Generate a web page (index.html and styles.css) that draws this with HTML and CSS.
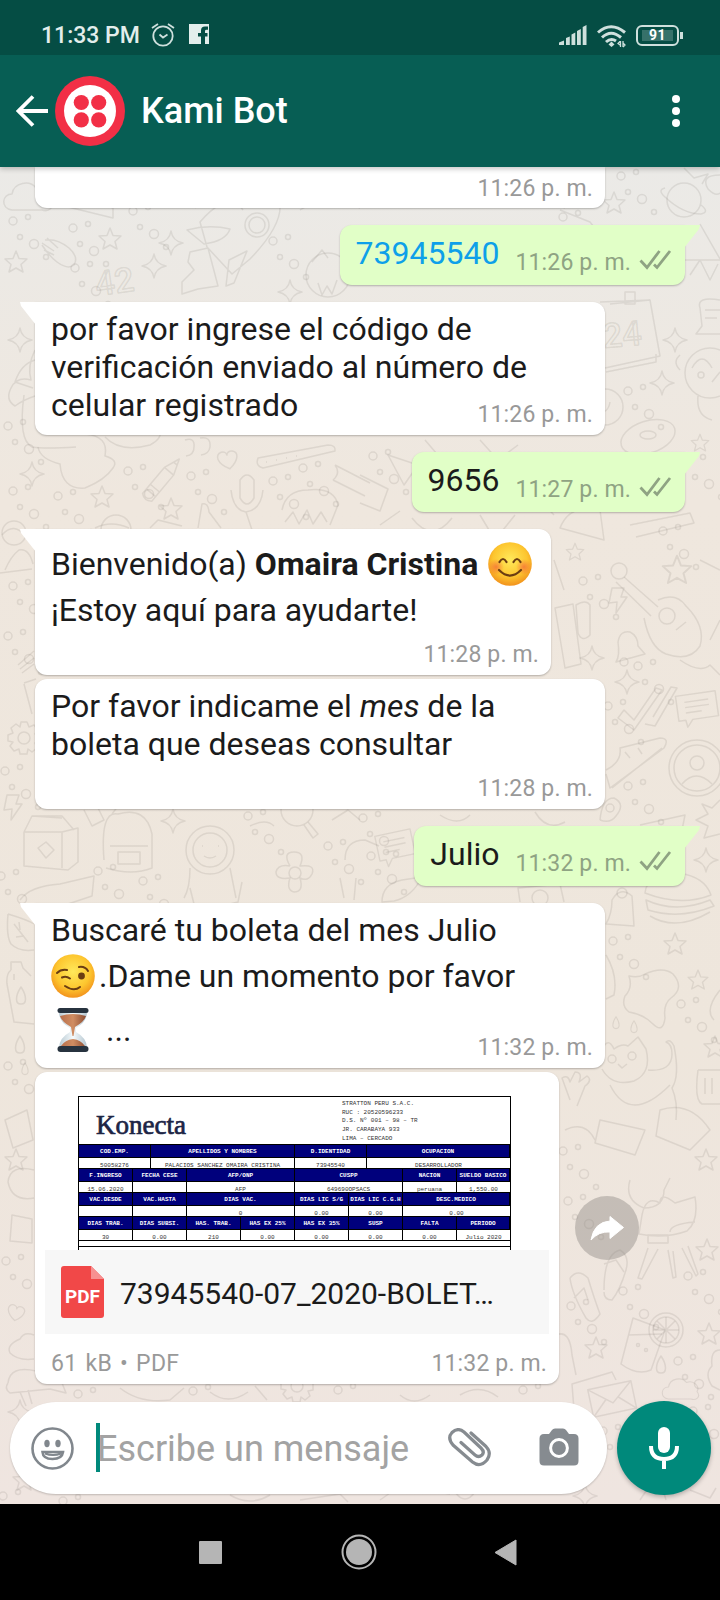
FILE: index.html
```html
<!DOCTYPE html>
<html lang="es">
<head>
<meta charset="utf-8">
<title>Kami Bot</title>
<link rel="stylesheet" href="styles.css">
</head>
<body>
<svg class="defs" width="0" height="0" aria-hidden="true">
  <defs>
    <symbol id="ticks" viewBox="0 0 32 21"><path d="M1 11.500l6.500 7L20 2M14.500 15.500l3 3L30.500 2" fill="none" stroke="#8fa383" stroke-width="2.800"/></symbol>
    <path id="star" d="M0-11L3-3.500 11-3 5 2.500 7 10 0 6-7 10-5 2.500-11-3-3-3.500Z"/>
    <path id="spark" d="M0-12Q1.500-2 12 0 1.500 2 0 12-1.500 2-12 0-1.500-2 0-12Z"/>
    <path id="heart" d="M0 9C-12 1-12-8-5-9-2-9 0-7 0-5 0-7 3-9 6-8 12-6 11 2 0 9Z"/>
    <path id="cloud" d="M-18 12C-30 10-28-4-18-4-16-16 0-18 6-10 16-14 24-4 20 2 26 10 18 14 12 12Z"/>
    <path id="drop" d="M0-9C6 0 6 8 0 8S-6 0 0-9Z"/>
    <path id="bolt" d="M-6-12L6-12 3-3 9-3-2 13-1 2-9 3Z"/>
    <g id="bubbles"><circle cx="3" cy="6" r="4"/><circle cx="18" cy="2" r="2.500"/><circle cx="10" cy="22" r="2.500"/><circle cx="24" cy="29" r="4.500"/><circle cx="36" cy="42" r="2.500"/></g>
    <g id="gear"><circle r="6"/><path d="M-3-16H3L5-11 10-13 14-8 11-4 16-3V4L11 5 13 10 8 14 4 11 3 16H-4L-5 11-10 13-14 8-11 4-16 3V-3L-11-5-13-10-8-14-4-11Z"/></g>
    <g id="pencil"><path d="M-6-14L0-30 6-14V20Q0 25-6 20ZM-6-14H6M-6 8H6M-6 14H6M-2-24H2"/></g>
    <g id="envelope"><path d="M-22-13H22V15H-22ZM-22-13L0 5 22-13M-22 15L-6 0M22 15L6 0"/></g>
    <g id="note"><path d="M-20-14H20V14H-6L-12 22-13 14H-20ZM-12-6H12M-12 0H12M-12 6H4"/></g>
    <linearGradient id="wallTint" x1="0" y1="0" x2="0" y2="1"><stop offset="0" stop-color="#ebeae7"/><stop offset=".25" stop-color="#efe7de"/><stop offset=".65" stop-color="#eee6dc"/><stop offset="1" stop-color="#efe5e0"/></linearGradient>
    <radialGradient id="face" cx=".5" cy=".4" r=".6"><stop offset="0" stop-color="#ffe95b"/><stop offset=".65" stop-color="#fdc62f"/><stop offset="1" stop-color="#f2921c"/></radialGradient>
    <radialGradient id="blush"><stop offset="0" stop-color="#f4693a" stop-opacity=".75"/><stop offset="1" stop-color="#f4693a" stop-opacity="0"/></radialGradient>
    <linearGradient id="glass"><stop offset="0" stop-color="#b9cad3"/><stop offset=".5" stop-color="#f5fafc"/><stop offset="1" stop-color="#b4c5cf"/></linearGradient>
    <linearGradient id="sand"><stop offset="0" stop-color="#b86f4b"/><stop offset=".5" stop-color="#d08d62"/><stop offset="1" stop-color="#8d4e34"/></linearGradient>
  </defs>
</svg>

<header class="top">
  <div class="status">
    <span class="clock">11:33 PM</span>
    <svg class="alarm" width="24" height="24" viewBox="0 0 24 24" fill="none" stroke="#cfe0dd" stroke-width="1.800"><circle cx="12" cy="13" r="9.700"/><path d="M1 5L7 1M23 5L17 1M8.500 11.500L12 14.500l4.500-3"/></svg>
    <svg class="fb" width="20" height="20" viewBox="0 0 20 20"><path d="M0 0H20V20H16V12.500h2.500V9H16V7q0-1.300 1.500-1.300H19V2.500H16Q12 2.500 12 6.500V9H9v3.500h3V20H0Z" fill="#e3eeec"/></svg>
    <span class="spacer"></span>
    <svg width="28" height="20" viewBox="0 0 28 20" fill="#cfe0dd"><path d="M0 20V17.500L5 15.500V20ZM7 20V13L10.800 11.500V20ZM12.500 20V9.500L16.300 7.500V20ZM18 20V6L21.800 4V20ZM23.700 20V2L27.500 0V20Z"/></svg>
    <svg class="wifi" width="29" height="23" viewBox="0 0 29 23" fill="none" stroke="#cfe0dd" stroke-width="3"><path d="M1 7.500Q14-4 28 7.500M5 12.500Q14 4 24 12.500M9 17Q14 12.500 19 16"/><path d="M14.500 16.500l3 3-3 2.500-3-2.500Z" stroke="none" fill="#cfe0dd"/><path d="M23 16.500l-2 2 2 1.500M26 22l2-2-2-2M23.500 16v6M26 16v6" stroke-width="1.300"/></svg>
    <div class="battery"><span>91</span></div>
  </div>
  <div class="bar">
    <svg class="back" width="32" height="32" viewBox="0 0 32 32" fill="none" stroke="#fff" stroke-width="3.800"><path d="M32 16H3M17 1.500L2.500 16 17 30.500"/></svg>
    <svg class="avatar" width="70" height="70" viewBox="0 0 70 70"><circle cx="35" cy="35" r="35" fill="#f22f46"/><circle cx="35" cy="35" r="26" fill="#fff"/><g fill="#f22f46"><circle cx="26.300" cy="26.500" r="7.600"/><circle cx="43.700" cy="26.500" r="7.600"/><circle cx="26.300" cy="43.900" r="7.600"/><circle cx="43.700" cy="43.900" r="7.600"/></g></svg>
    <h1>Kami Bot</h1>
    <svg width="8" height="34" viewBox="0 0 8 34" fill="#fff"><circle cx="4" cy="5" r="4"/><circle cx="4" cy="17" r="4"/><circle cx="4" cy="29" r="4"/></svg>
  </div>
</header>

<main class="chat">
  <svg class="wallpaper" width="720" height="1337" viewBox="0 167 720 1337" aria-hidden="true">
    <rect y="167" width="720" height="1337" fill="url(#wallTint)"/>
    <g fill="none" stroke="#6f6a60" stroke-opacity=".14" stroke-width="1.500" stroke-linejoin="round">
      <use href="#cloud" x="30" y="198"/>
      <use href="#star" x="110" y="239"/><use href="#star" x="16" y="262"/><use href="#spark" x="171" y="243"/><use href="#spark" x="154" y="266"/><use href="#spark" x="290" y="292"/>
      <path d="M45 240q12-2 24 8 10 9 5 17-6 5-17-3-8-6-15-17M42 243l12 8M47 238l11 10M44 250l10 5"/>
      <path d="M187 230q22-6 43-1-4 12-26 15ZM200 222q20-24 52-30l28 12q2 22-30 55l-18 15-25-27ZM190 252l18-4 10 38-20 3-16 5 0-12 12-12-6-8ZM226 286l3-26 18-9-13 32Z"/><circle cx="257" cy="225" r="12"/><circle cx="257" cy="225" r="8"/>
      <text class="doodle-num" x="97" y="296" transform="rotate(-8 97 296)">42</text>
      <path d="M195 208q12-18 40-8l8 10M300 210q30-20 60-2M60 205q25-10 53 3v10z"/>
      <circle cx="328" cy="275" r="22"/><path d="M318 283l4 12 5-9 5 8 5-14M312 262l10-12 6 8"/>
      <circle cx="684" cy="200" r="17"/><path d="M665 188q-8 2 0 9 18 17 36 17 9-2 0-9"/><use href="#star" x="614" y="203"/><path d="M684 168l10 10 14-4-6 10M720 175q-20 0-12 14 8 8 12 4"/>
      <path d="M685 260h35M690 275l10-15 10 20 8-16M700 224l20 35M560 210l30 12 12 15M525 190l40 18"/>
      <use href="#bubbles" x="618" y="170"/><use href="#bubbles" x="560" y="211"/><use href="#bubbles" x="10" y="215"/><use href="#bubbles" x="70" y="222"/><use href="#bubbles" x="130" y="205"/><use href="#bubbles" x="270" y="235"/><use href="#bubbles" x="72" y="262"/>
      <use href="#spark" x="20" y="340"/><path d="M35 350q-8 16-4 30-14-4-20 8-6 12 4 18 8-6 20-10M24 395q-6 45 8 52 12 2 44 0M35 360q-14 4-20 22l18 6"/>
      <path d="M38 447q2 12 22 17 2 26 25 24 20-8 28-20 6-8-8-12 4-20-20-22"/>
      <path d="M105 437q15 16 45 8 12-6 10-14M185 440q10-3 9 7 0 8-8 9M200 438q11-2 10 9-1 7-9 8"/>
      <use href="#heart" transform="translate(228 460) rotate(-12)"/><use href="#pencil" transform="translate(160 482) rotate(40)"/>
      <path d="M258 458l70-13q8 0 7 6l-72 17q-8-2-5-10ZM266 462h1M276 460h1M286 458h1M296 456h1"/>
      <path d="M240 480q7-10 14 0v18q-7 12-14 0ZM231 490q2 20 15 22 15-2 17-22M246 512l6 18"/>
      <path d="M335 465l35 18M333 480l32 16M335 465q6 8-2 15M282 510q4-20 26-20 26-3 30 15l-8 20M285 522l8-10 6 12 8-14 6 14 8-12 6 10M198 528l4-24q6-2 7 8l12 16"/>
      <use href="#spark" x="32" y="474"/><use href="#star" x="102" y="497"/><use href="#star" x="171" y="509"/><use href="#bubbles" x="5" y="420"/><use href="#bubbles" x="10" y="485"/><use href="#bubbles" x="125" y="465"/><use href="#bubbles" x="55" y="490"/><use href="#bubbles" x="188" y="470"/><use href="#bubbles" x="270" y="475"/><use href="#bubbles" x="300" y="462"/>
      <path d="M600 302l50-2 10 56-55 12M606 372l50-10v-8M625 292h10v12h-10zM610 304l40-4"/><text class="doodle-num" x="604" y="348" transform="rotate(-5 604 348)">24</text>
      <use href="#spark" x="675" y="340"/><use href="#spark" x="662" y="383"/><path d="M720 300q-24-4-20 8l2 18-6 8h24M705 310h15M705 318h12"/>
      <circle cx="710" cy="373" r="25"/><circle cx="701" cy="375" r="3"/><path d="M680 370q-8-8 0-15M692 368q10-18 20 0M712 382l8-10M698 396q-2 20 14 24"/>
      <circle cx="605" cy="407" r="18"/><circle cx="600" cy="402" r="3"/><path d="M598 412q10 2 12-10"/>
      <ellipse cx="648" cy="437" rx="28" ry="16" transform="rotate(-18 648 437)"/><ellipse cx="648" cy="435" rx="8" ry="4"/><use href="#star" transform="translate(700 443) scale(.8)"/>
      <path d="M388 455l30 10-14 20zM360 475l28 14-8 22-20-8M425 440l12 14M480 440l18 20 20-15M412 518q20 26 40 0M480 515l15 25 20-25M560 528q10-25 40-18l4 30ZM630 525l60-12 4 10-58 14M540 500l14 15"/>
      <use href="#bubbles" x="625" y="385"/><use href="#bubbles" x="685" y="455"/><use href="#bubbles" x="370" y="450"/>
      <use href="#star" transform="translate(677 570) scale(1.300)"/><use href="#star" transform="translate(575 552) scale(.8)"/>
      <circle cx="619" cy="571" r="8"/><path d="M624 577l34 30M616 582l35 34M658 600q18-8 28 6 20 20 14 40-10 16-34 8-16-6-22-36M676 630l10-8"/><circle cx="667" cy="616" r="8"/><use href="#bolt" x="618" y="600"/>
      <path d="M700 560l20 10M710 640l10-20M680 660q20 14 30 5l10 10M554 560l10 30M555 608l18-4 8 60-16 4ZM576 605q10-6 14 0l0 30q-8 8-12-2z"/>
      <use href="#bubbles" x="580" y="575"/><use href="#bubbles" x="660" y="525"/>
      <path d="M616 662q4-6 2-20 2-12 12-10 8 4 8 14l7 8Z"/><circle cx="624" cy="662" r="4"/><use href="#spark" x="592" y="658"/><use href="#spark" x="627" y="682"/>
      <path d="M618 718l16 12 28-40-6-2-22 32-10-10ZM645 724l10 2 22-38-6-1-18 30"/><use href="#note" transform="translate(697 706) rotate(-8) scale(1 .9)"/><use href="#bubbles" x="635" y="660"/><use href="#bubbles" x="605" y="700"/>
      <path d="M606 770q16-8 14-22l40-10q10 0 4 10l-54 40-4-14M612 788l50-40M625 752l5 6M638 748l4 6"/>
      <circle cx="697" cy="768" r="28"/><circle cx="697" cy="768" r="23"/><circle cx="697" cy="763" r="7"/><path d="M682 784q14-16 30 0"/><use href="#bubbles" x="625" y="780"/>
      <path d="M600 820q2-22 14-22 12 6 2 18-6 8-16 4M440 815q18 12 30 0M535 812q12 20 30 10M640 825l45-10-4 20M720 800l-8 8-10-4 6 10-12 6 12 6-4 12 16-4"/><circle cx="610" cy="808" r="4"/>
      <use href="#note" transform="translate(395 845) rotate(-12) scale(.9)"/><use href="#bubbles" x="360" y="812"/><use href="#bubbles" x="368" y="850"/><use href="#spark" x="706" y="860"/>
      <path d="M382 902q0-18 20-22l20-3q-10 20-28 24Z"/><path d="M645 893q2-20 34-20 26 4 32 22-30 12-66-2ZM646 900q30 14 64 0l4 6q-34 14-66 4zM650 916q26 16 60-4M520 902l-2-14 42-4 4 18"/>
      <path d="M606 924q6-10 6-24 8-14 20-4l2 30Z"/><circle cx="622" cy="893" r="5"/><circle cx="540" cy="898" r="8"/>
      <use href="#star" x="675" y="944"/><use href="#star" transform="translate(698 980) scale(.9)"/><use href="#star" x="715" y="1047"/><use href="#bubbles" x="610" y="935"/><use href="#bubbles" x="678" y="998"/>
      <path d="M629 976q10 2 16-2 18-8 28 0 12 14-2 24-8 6-6 20-2 16-12 6-10-10-24-12-8-6-4-16 8-8 4-20ZM606 955q12 20 8 40l-8 4"/>
      <path d="M602 1050q6-14 12-1 8-6 14-3l10-9 8 12q6 24-12 32-22 6-32-12M648 1070q24 2 24-16 0-10-6-12 4-4 8 4 6 30-2 42 6 14 4 32M610 1085q20 40 60 0"/><circle cx="612" cy="1059" r="4"/><circle cx="632" cy="1056" r="4"/><path d="M618 1064l4 4 5-4"/>
      <use href="#drop" transform="translate(616 1023) scale(.7)"/><use href="#drop" transform="translate(634 1027) scale(.7)"/>
      <path d="M698 1070h22M698 1070q-4 30 4 34h18M705 1078v16M712 1078v16M720 990q-16 20-6 30"/>
      <path d="M570 1100l-8-22q6-4 8 4l5-10q8 0 4 10l8-6q6 4-2 10l-8 20M565 1130q20-10 30 10M600 1120l45 10-10 25-40-12ZM660 1110q30-10 50 20l-20 20-34-14Z"/><use href="#bubbles" x="560" y="1145"/><use href="#star" x="706" y="1160"/>
      <path d="M630 1180q-6 20 14 28 20 0 20-18l6-12M642 1215q4-20 18-12 0-12 15 0l20-6q4 24-8 34-22 8-48 3ZM670 1232q0-8 25-10M648 1248l-10 30 4 1 16-30M668 1250l5 28 3-1-3-26M682 1248l14 28 2-2-10-28M648 1235h20v8h-20z"/>
      <use href="#star" x="707" y="1250"/><use href="#star" x="709" y="1334"/><use href="#star" x="596" y="1348"/>
      <path d="M570 1278q8-10 18 0 6 20 12 36-8 12-14 4-14-24-16-40M574 1298l10-10 4 12M604 1290q0-36 16-40 10 6 6 20-6 20-14 30-8 0-8-8M604 1264l12-4 8 12"/>
      <path d="M633 1318l32 12-14 40q-14 6-30-6ZM628 1335l34-1"/><circle cx="666" cy="1330" r="17"/><circle cx="666" cy="1330" r="13"/><path d="M666 1317v26M653 1330h26M657 1321l18 18M675 1321l-18 18"/><circle cx="638" cy="1345" r="1.500"/><circle cx="646" cy="1350" r="1.500"/>
      <use href="#envelope" transform="translate(612 1398) rotate(-12)"/><path d="M574 1410l-2-26 40-12 4 8"/><use href="#cloud" transform="translate(682 1390) scale(.75)"/><use href="#drop" x="661" y="1365"/>
      <path d="M556 1335q14-6 16 20l4 20M720 1350q-10 0-8 16-8 8 0 20l8 4"/><use href="#bubbles" x="620" y="1285"/><use href="#bubbles" x="685" y="1270"/><use href="#bubbles" x="568" y="1300"/><use href="#bubbles" x="565" y="1195"/><use href="#bubbles" x="675" y="1355"/><use href="#bubbles" x="600" y="1425"/>
      <use href="#spark" x="585" y="1496"/><path d="M640 1500l8-12 8 6 6-8 4 14M690 1490l20 8 6-10M380 1500l20-14 50 8M455 1492q10 14 20 0M300 1500l40-6 8 8M230 1495q20 12 40 0"/>
      <path d="M5 570q6-14 14-20 10-2 14 14M0 573l32-4M95 528q16-8 34 0M150 528l8-8 24 6M380 525l20-14M2 535q12-14 24 2"/><circle cx="116" cy="530" r="15"/><circle cx="14" cy="533" r="12"/>
      <use href="#bubbles" x="10" y="580"/><use href="#bubbles" x="5" y="630"/><path d="M18 665l16-14M20 669l14-11M22 673l12-9M24 683l12-4M24 684l8 30"/>
      <use href="#gear" x="24" y="738"/><use href="#bubbles" x="2" y="765"/><use href="#bolt" x="13" y="807"/>
      <path d="M24 832l8-16h30l12 14M24 832v34l44 4 10-8v-34l-16 4H24M62 832v36M32 816l30 2M38 848l8-6 8 8-8 8Z"/>
      <path d="M104 860q-4-50 14-46 28-8 34 20v34q-20 8-46 0M84 810l8 16 12-6-6-12M110 846h38M118 852h22v12h-22zM112 814l6-8 16 2"/>
      <circle cx="210" cy="850" r="24"/><circle cx="210" cy="850" r="17"/><path d="M190 868q0 20-6 30M230 868l6 30M202 846h1M218 846h1M204 856q6 4 12 0"/><use href="#spark" x="173" y="821"/>
      <circle cx="297" cy="810" r="16"/><path d="M308 822l10 12-5 4-9-13M332 820l16-10 12 10M250 826q16-8 24 0"/><circle cx="295" cy="873" r="6"/><path d="M290 866q-8-14 4-14 12 0 6 14 16-2 12 8-4 8-12 4 4 14-6 14-8-2-4-14-14 2-14-6 2-8 14-6"/>
      <path d="M345 860q0-20 20-20l14 6M20 900q10-14 40-16l34-8-2 20-24 8M190 888l4 16 20 4 24-6 4-20M340 878l4 20M356 878l-2 22"/><use href="#bubbles" x="140" y="875"/><use href="#bubbles" x="245" y="810"/><use href="#bubbles" x="95" y="865"/><use href="#bubbles" x="325" y="840"/>
      <use href="#bubbles" x="-2" y="870"/><path d="M8 914q20 6 26 10M8 914q-2 22 3 30 8 8 23 6M14 924l14 18M20 930l-1-8M24 936l-8 1"/>
      <path d="M11 970q-5 4-4 14l7 38 20 2M11 970v-8h10l2 6 8 8M14 980v-6"/><use href="#drop" x="21" y="996"/><use href="#drop" x="20" y="1045"/><use href="#drop" transform="translate(25 1069) scale(.7)"/><use href="#bubbles" x="5" y="1060"/>
      <path d="M5 1120l22-10 6 30-20 8ZM34 1170q-24-6-26 12 4 20 26 16M12 1215l20 4v24l-22-2Z"/><use href="#star" x="16" y="1160"/><use href="#bubbles" x="3" y="1255"/>
      <use href="#heart" transform="translate(16 1313) rotate(10) scale(.85)"/><path d="M34 1335q-10-4-14 4-14 6-10 14 8 8 24 6"/>
      <path d="M8 1383q2-18 28-12l26 12 4 10-16-4-40 4q-6-4-2-10M20 1392l6 14M28 1390l4 14M120 1388q20 16 50 12l14-12M210 1392q18 14 38 0M255 1386l12 14M400 1395q14 12 30 0M460 1395q20-12 38 2"/>
      <use href="#gear" x="297" y="1386"/><use href="#bubbles" x="75" y="1388"/><use href="#bubbles" x="190" y="1385"/><use href="#bubbles" x="335" y="1384"/><use href="#bubbles" x="520" y="1384"/>
      <use href="#spark" x="20" y="1412"/><use href="#star" x="24" y="1480"/><use href="#bubbles" x="0" y="1490"/><use href="#bubbles" x="60" y="1495"/><use href="#bubbles" x="690" y="1405"/>
    </g>
  </svg>

  <div class="thread">
    <div class="msg in cont cut w570"><time>11:26 p. m.</time></div>

    <div class="msg out"><p class="phone">73945540</p><time>11:26 p. m.</time><svg class="ticks" width="33" height="21"><use href="#ticks"/></svg></div>

    <div class="msg in w570"><div class="text"><p>por favor ingrese el código de</p><p>verificación enviado al número de</p><p>celular registrado</p></div><time>11:26 p. m.</time></div>

    <div class="msg out"><p>9656</p><time>11:27 p. m.</time><svg class="ticks" width="33" height="21"><use href="#ticks"/></svg></div>

    <div class="msg in w516 roomy">
      <div class="text">
        <p class="tall">Bienvenido(a) <b>Omaira Cristina</b> <svg class="emoji smile" width="44" height="44" viewBox="0 0 44 44"><circle cx="22" cy="22" r="21.800" fill="url(#face)"/><circle cx="8" cy="25" r="8" fill="url(#blush)"/><circle cx="36" cy="25" r="8" fill="url(#blush)"/><path d="M11.500 20q3.500-6 7 0M25.500 20q3.500-6 7 0" fill="none" stroke="#6b3d12" stroke-width="2.200" stroke-linecap="round"/><path d="M11 28q11 11 22 0" fill="none" stroke="#6b3d12" stroke-width="2.200" stroke-linecap="round"/></svg></p>
        <p>¡Estoy aquí para ayudarte!</p>
      </div>
      <time>11:28 p. m.</time>
    </div>

    <div class="msg in cont w570 roomy"><div class="text"><p>Por favor indicame el <i>mes</i> de la</p><p>boleta que deseas consultar</p></div><time>11:28 p. m.</time></div>

    <div class="msg out"><p>Julio</p><time>11:32 p. m.</time><svg class="ticks" width="33" height="21"><use href="#ticks"/></svg></div>

    <div class="msg in w570">
      <div class="text">
        <p>Buscaré tu boleta del mes Julio</p>
        <p class="tall"><svg class="emoji wink" width="44" height="44" viewBox="0 0 44 44"><circle cx="22" cy="22" r="21.800" fill="url(#face)"/><g fill="none" stroke="#6b3d12" stroke-width="2" stroke-linecap="round"><path d="M6 19q4-4 10-3M28 13q6-1 9 4M11 23.500q4-2 8 1M14 32q9 6 15 1"/></g><circle cx="30.500" cy="22" r="3.400" fill="#6b3d12"/></svg>.Dame un momento por favor</p>
        <p class="tall"><svg class="emoji" width="44" height="44" viewBox="0 0 44 44"><path d="M8 4H36Q36 14 25 20V24Q36 30 36 40H8Q8 30 19 24V20Q8 14 8 4Z" fill="url(#glass)"/><path d="M9 8Q22 4 35 8 33 14 24 19L22.500 28H21.500L20 19Q11 14 9 8ZM10 38Q14 32 22 31 30 32 34 38Z" fill="url(#sand)"/><rect x="6.500" y="0" width="31" height="5" rx="2.500" fill="#27333f"/><rect x="6.500" y="38" width="31" height="6" rx="3" fill="#27333f"/></svg><span class="dots">...</span></p>
      </div>
      <time>11:32 p. m.</time>
    </div>

    <div class="doc-row">
      <div class="msg in cont doc">
        <div class="preview">
          <div class="sheet">
            <div class="letterhead">
              <span class="logo">Konecta</span>
              <address>STRATTON PERU S.A.C.<br>RUC : 20520596233<br>D.S. Nº 001 – 98 – TR<br>JR. CARABAYA 933<br>LIMA – CERCADO</address>
            </div>
            <div class="cells r1"><b>COD.EMP.</b><b>APELLIDOS Y NOMBRES</b><b>D.IDENTIDAD</b><b>OCUPACION</b><span>50058276</span><span>PALACIOS SANCHEZ OMAIRA CRISTINA</span><span>73945540</span><span>DESARROLLADOR</span></div>
            <div class="cells r2"><b>F.INGRESO</b><b>FECHA CESE</b><b>AFP/ONP</b><b>CUSPP</b><b>NACION</b><b>SUELDO BASICO</b><span>15.06.2020</span><span></span><span>AFP</span><span>649690OPSACS</span><span>peruana</span><span>1,550.00</span></div>
            <div class="cells r3"><b>VAC.DESDE</b><b>VAC.HASTA</b><b>DIAS VAC.</b><b>DIAS LIC S/G</b><b>DIAS LIC C.G.H</b><b>DESC.MEDICO</b><span></span><span></span><span>0</span><span>0.00</span><span>0.00</span><span>0.00</span></div>
            <div class="cells r4"><b>DIAS TRAB.</b><b>DIAS SUBSI.</b><b>HAS. TRAB.</b><b>HAS EX 25%</b><b>HAS EX 35%</b><b>SUSP</b><b>FALTA</b><b>PERIODO</b><span>30</span><span>0.00</span><span>210</span><span>0.00</span><span>0.00</span><span>0.00</span><span>0.00</span><span>Julio 2020</span></div>
            <div class="blank"></div>
          </div>
        </div>
        <div class="file">
          <svg width="43" height="52" viewBox="0 0 43 52"><path d="M3 0H30L43 13V49Q43 52 40 52H3Q0 52 0 49V3Q0 0 3 0Z" fill="#f14848"/><path d="M30 0L43 13H30Z" fill="#f79191"/><text x="21.500" y="37" text-anchor="middle" class="pdf-label">PDF</text></svg>
          <span class="file-name">73945540-07_2020-BOLET…</span>
        </div>
        <div class="meta"><span class="kind">61 kB • PDF</span><time>11:32 p. m.</time></div>
      </div>
      <svg class="forward" width="64" height="64" viewBox="0 0 64 64"><circle cx="32" cy="32" r="32" fill="#8b8580" fill-opacity=".42"/><path d="M16 44Q19 26 35 25V20.500L48.500 31.500 35 42.500V36Q24 35 16 44Z" fill="#fff" stroke="#fff" stroke-linejoin="round"/></svg>
    </div>
  </div>

  <div class="composer">
    <div class="field">
      <svg width="43" height="43" viewBox="0 0 43 43" fill="none" stroke="#81878d" stroke-width="2.600"><circle cx="21.500" cy="21.500" r="20"/><g fill="#81878d" stroke="none"><ellipse cx="16" cy="16.500" rx="2.700" ry="3.700"/><ellipse cx="27" cy="16.500" rx="2.700" ry="3.700"/></g><path d="M11.500 25H32Q31 32 21.500 32T11.500 25Z"/><path d="M14 26.500q8 3 16 0" stroke-width="2"/></svg>
      <i class="caret"></i>
      <span class="hint">Escribe un mensaje</span>
      <svg class="clip" width="44" height="40" viewBox="0 0 44 40" fill="none" stroke="#868b90" stroke-width="3.200" stroke-linecap="round"><path d="M23 5L38 18.500Q44 25 39 32 32 40 24.500 34L5 17Q-1 10 4 4.500 10-1 16 4L33 20Q37 24 34 27 30.500 30 27 27L13 14.500"/></svg>
      <svg class="camera" width="40" height="38" viewBox="0 0 40 38"><path d="M5 6H10L13 2Q14 .5 16 .5H24Q26 .5 27 2L30 6H35Q39.500 6 39.500 10.500V33Q39.500 37.500 35 37.500H5Q.5 37.500 .5 33V10.500Q.5 6 5 6Z" fill="#868b90"/><circle cx="20" cy="20" r="8.400" fill="none" stroke="#fff" stroke-width="3"/></svg>
    </div>
    <div class="mic"><svg width="30" height="42" viewBox="0 0 30 42"><rect x="9" y="0" width="12" height="26" rx="6" fill="#fff"/><path d="M2 19Q2 32 15 32T28 19M15 32V42" fill="none" stroke="#fff" stroke-width="4"/></svg></div>
  </div>
</main>

<nav class="nav">
  <svg width="23" height="23"><rect width="23" height="23" rx="1" fill="#b5b5b5"/></svg>
  <svg width="36" height="36"><circle cx="18" cy="18" r="16.500" fill="none" stroke="#b5b5b5" stroke-width="2"/><circle cx="18" cy="18" r="13" fill="#b5b5b5"/></svg>
  <svg width="23" height="27"><path d="M22 1V26L1 13.500Z" fill="#b5b5b5" stroke="#b5b5b5" stroke-linejoin="round"/></svg>
</nav>
</body>
</html>
```
FILE: styles.css
```css
* { box-sizing: border-box; }
body { margin: 0; width: 720px; height: 1600px; overflow: hidden; display: flex; flex-direction: column; font-family: Roboto, "Noto Sans", sans-serif; color: #1b1b1b; background: #000; }
p, h1 { margin: 0; font-weight: 400; }
svg { display: block; flex: none; }
.defs { position: absolute; }

.top { flex: none; height: 167px; background: #075e54; color: #fff; position: relative; z-index: 2; box-shadow: 0 2px 5px rgba(0,0,0,.22); }
.status { height: 55px; background: #054d44; display: flex; align-items: center; padding: 15px 41px 0 41px; }
.clock { font-size: 23px; font-weight: 500; color: #e3eeec; width: 110px; white-space: nowrap; }
.fb { margin-left: 14px; margin-top: -3px; }
.spacer { flex: 1; }
.wifi { margin-left: 10px; margin-top: 2px; }
.battery { position: relative; margin-left: 10px; width: 43px; height: 21px; border: 2.500px solid #cfe0dd; border-radius: 6px; padding: 3px 4px; }
.battery::after { content: ""; position: absolute; right: -6px; top: 5px; width: 3px; height: 7px; background: #cfe0dd; }
.battery span { display: block; height: 11px; background: #36716a; font-size: 14px; line-height: 11px; font-weight: 700; text-align: center; letter-spacing: .5px; }
.bar { height: 112px; display: flex; align-items: center; padding: 0 40px 0 16px; }
.avatar { margin-left: 7px; }
.bar h1 { flex: 1; margin-left: 16px; font-size: 36px; font-weight: 500; line-height: 42px; }

.chat { height: 1337px; flex: none; position: relative; overflow: hidden; display: flex; flex-direction: column; }
.wallpaper { position: absolute; left: 0; top: 0; }
.doodle-num { font: 500 34px Roboto, sans-serif; }
.thread { position: relative; flex: none; display: flex; flex-direction: column; align-items: flex-start; padding: 0 35px; }

.msg { position: relative; margin-top: 17px; border-radius: 12px; background: #fff; box-shadow: 0 1px 2px rgba(0,0,0,.25); font-size: 32px; line-height: 38px; white-space: nowrap; }
.msg p { height: 38px; }
.msg p.tall { height: 54px; line-height: 54px; }
.msg time, .meta { font-size: 23px; line-height: 28px; color: #999; letter-spacing: .15px; }
.in { display: grid; padding: 8px 12px 6px 16px; border-top-left-radius: 0; }
.in > * { grid-area: 1 / 1; }
.in > time { align-self: end; justify-self: end; }
.in .text { padding-bottom: 5px; }
.in.roomy .text { padding-bottom: 40px; }
.in::before { content: ""; position: absolute; left: -15px; top: 0; width: 16px; height: 23px; background: inherit; clip-path: polygon(0 0, 100% 0, 100% 100%, 1px 4px); }
.cont { border-top-left-radius: 12px; margin-top: 4px; }
.cont::before { display: none; }
.cut { margin-top: 0; height: 41px; border-radius: 0 0 12px 12px; padding-bottom: 7px; }
.w570 { width: 570px; }
.w516 { width: 516px; }

.out { align-self: flex-end; display: flex; height: 60px; padding: 9px 13px 0 16px; background: #e1ffc7; border-top-right-radius: 0; }
.out::before { content: ""; position: absolute; right: -15px; top: 0; width: 16px; height: 23px; background: inherit; clip-path: polygon(0 0, 100% 0, calc(100% - 1px) 4px, 0 100%); }
.out time { margin: 15px 0 0 16px; height: 28px; color: #8fa383; }
.ticks { margin: 15px 0 0 8px; }
.phone { color: #0ea0e9; }

.emoji { display: inline-block; vertical-align: -11px; }
.smile { margin-left: 2px; }
.wink { margin-right: 4px; }
.dots { margin-left: 11px; }

.doc-row { display: flex; align-items: center; gap: 16px; }
.doc { width: 524px; height: 312px; display: flex; flex-direction: column; padding: 10px; }
.preview { height: 168px; padding: 14px 38px 0 33px; overflow: hidden; flex: none; }
.sheet { width: 433px; height: 170px; border: 1.500px solid #000; border-bottom: 0; font: 6px/9px "Liberation Mono", monospace; color: #333; }
.letterhead { height: 47px; display: flex; }
.logo { width: 248px; padding: 14px 0 0 17px; font: 400 27px/28px "Liberation Serif", serif; color: #1c2545; -webkit-text-stroke: .7px #1c2545; }
.letterhead address { font-style: normal; margin: 3px 0 0 15px; line-height: 8.700px; }
.cells { display: grid; grid-template-rows: 13px 11px; height: 24px; text-align: center; overflow: hidden; }
.cells b, .cells span { border-right: 1.500px solid #000; overflow: hidden; }
.cells b { background: #00007c; color: #fff; border-top: 1px solid #000; line-height: 13px; }
.cells span { border-top: 1px solid #000; line-height: 15px; }
.r1 { grid-template-columns: 72px 144px 72px 1fr; }
.r2 { grid-template-columns: 54px 54px 108px 108px 54px 1fr; }
.r3 { grid-template-columns: 54px 54px 108px 54px 54px 1fr; }
.r4 { grid-template-columns: repeat(7, 54px) 1fr; }
.cells > :nth-child(4n):last-child { border-right: 0; }
.blank { height: 7px; border-top: 1px solid #000; border-bottom: 1px solid #000; }
.file { height: 84px; flex: none; background: #f7f7f7; display: flex; align-items: center; padding-left: 16px; gap: 16px; font-size: 30px; }
.file-name { padding-top: 3px; }
.pdf-label { font: 700 19px Roboto, sans-serif; fill: #fff; }
.meta { display: flex; justify-content: space-between; padding: 16px 2px 0 6px; }
.kind { word-spacing: 2px; letter-spacing: .3px; }
.forward { margin-top: 4px; }

.composer { position: relative; flex: none; display: flex; align-items: center; gap: 10px; padding: 17px 9px 9px 10px; }
.field { width: 597px; height: 92px; border-radius: 46px; background: #fff; box-shadow: 0 1px 2px rgba(0,0,0,.2); display: flex; align-items: center; padding: 0 28px 0 21px; }
.caret { width: 4px; height: 49px; background: #00897b; margin: -1px 0 0 22px; }
.hint { flex: 1; font-size: 36px; line-height: 44px; color: #a3a3a3; margin: 2px 0 0 -3px; white-space: nowrap; }
.camera { margin: -3px 0 0 46px; }
.clip { margin-right: 1px; }
.mic { width: 94px; height: 94px; border-radius: 50%; background: #00897b; display: grid; place-items: center; box-shadow: 0 2px 4px rgba(0,0,0,.25); }

.nav { height: 96px; flex: none; background: #000; display: flex; align-items: center; padding-left: 199px; }
.nav svg:nth-child(2) { margin-left: 119px; }
.nav svg:nth-child(3) { margin-left: 117px; }
```
